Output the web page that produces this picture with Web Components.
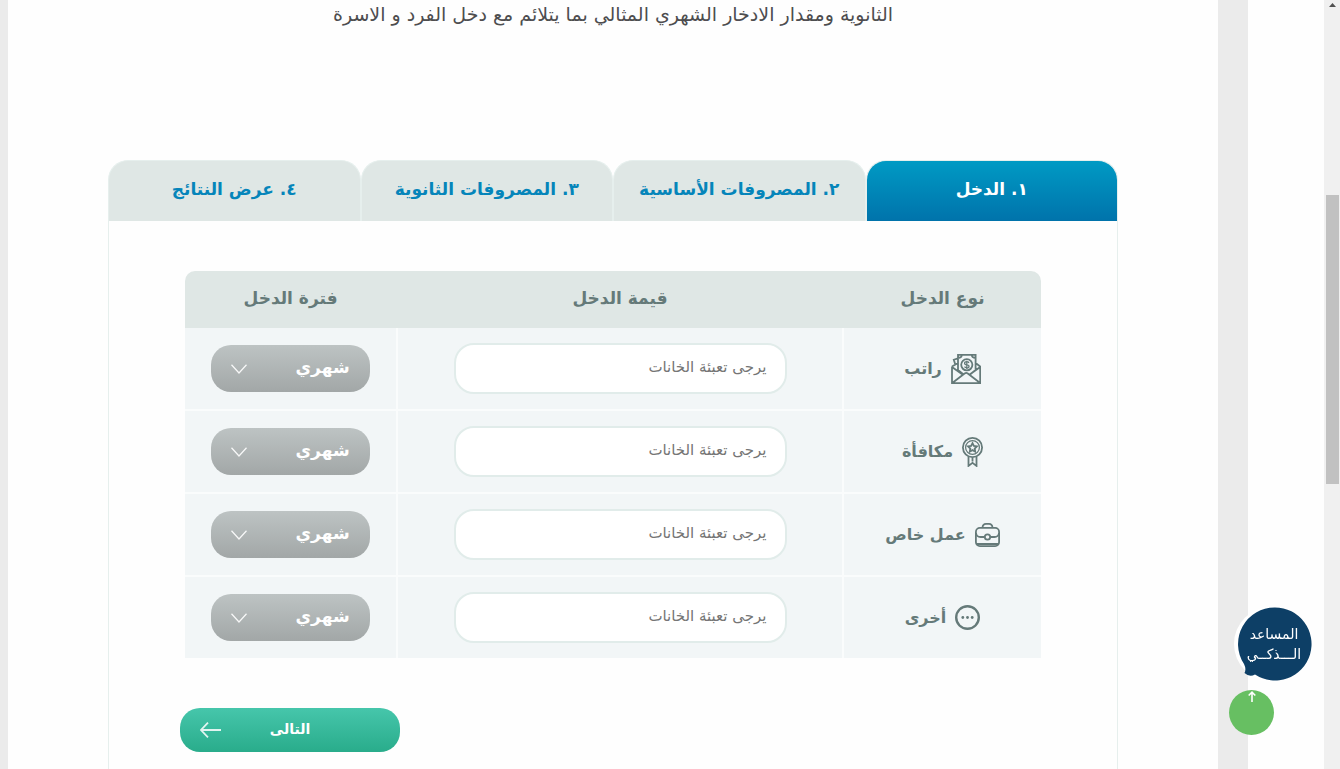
<!DOCTYPE html>
<html lang="ar" dir="rtl">
<head>
<meta charset="utf-8">
<title>حاسبة الادخار</title>
<style>
    body {
        margin: 0;
        background: #fefefe;
        font-family: "DejaVu Sans", sans-serif;
        color: #444;
    }
</style>
</head>
<body>

<page-frame>
    <p slot="intro">الثانوية ومقدار الادخار الشهري المثالي بما يتلائم مع دخل الفرد و الاسرة</p>
    <step-tabs>
        <step-tab active>١. الدخل</step-tab>
        <step-tab>٢. المصروفات الأساسية</step-tab>
        <step-tab>٣. المصروفات الثانوية</step-tab>
        <step-tab>٤. عرض النتائج</step-tab>
    </step-tabs>
    <step-panel>
        <income-table></income-table>
        <next-button slot="actions">التالى</next-button>
    </step-panel>
    <scroll-track slot="scroll"></scroll-track>
</page-frame>

<floating-tools></floating-tools>

<script>
const icons = {
    salary: `<svg width="30" height="30" viewBox="0 0 30 30">
        <path d="M7 16V.8h17.6V16M1 12.6v16.6h28.200V12.600L24.600 9M1 12.600L7 9M1 13l10.500 7.500M29.200 13l-10.500 7.500M1.600 28.800l12-9.300q1.600-1.100 3.200 0l12 9.300M7 4.300L2.800 5.700l1.600 5M10.800 .8q0 3-3.800 3.200M20.800 .8q0 3 3.800 3.200M7 16l5 4M24.600 16l-5 4"/>
        <circle cx="15.800" cy="10.800" r="5.600"/>
        <path stroke-width="1.300" d="M18 8.900q-.8-1.200-2.200-1.200-2.200 0-2.200 1.500t2.200 1.600 2.200 1.600-2.200 1.500q-1.500 0-2.300-1.200M15.800 6.700v8.300"/>
    </svg>`,
    bonus: `<svg width="21" height="30" viewBox="0 0 21 30">
        <circle cx="10.500" cy="10.500" r="9.600"/>
        <circle cx="10.500" cy="10.500" r="6.900" stroke-width="1.300"/>
        <path d="M10.500 6.200l1.400 2.700 3 .5-2.200 2.100.5 3-2.700-1.400-2.700 1.400.5-3-2.200-2.100 3-.5zM6.500 19.800v9.100l4-3 4 3v-9.100M10.500 20.500v4"/>
    </svg>`,
    business: `<svg width="25" height="24" viewBox="0 0 25 24">
        <rect x=".9" y="4.900" width="23.200" height="18.200" rx="4"/>
        <path d="M7.500 4.600Q7.800.9 11 .9h3q3.200 0 3.500 3.700M1 10q.5 4 4.500 4h4M24 10q-.5 4-4.500 4h-4M1.500 21h22"/>
        <circle cx="12.500" cy="14" r="2.700"/>
    </svg>`,
    other: `<svg width="25" height="25" viewBox="0 0 25 25">
        <circle cx="12.500" cy="12.500" r="11.300" stroke-width="2.400"/>
        <g fill="currentColor" stroke="none">
            <circle cx="7.800" cy="12.500" r="1.400"/>
            <circle cx="12.500" cy="12.500" r="1.400"/>
            <circle cx="17.200" cy="12.500" r="1.400"/>
        </g>
    </svg>`
}

const rows = [
    { id: 'salary', label: 'راتب' },
    { id: 'bonus', label: 'مكافأة' },
    { id: 'business', label: 'عمل خاص' },
    { id: 'other', label: 'أخرى' }
]

customElements.define('page-frame', class extends HTMLElement {

    constructor() {
        super()

        this.attachShadow({ mode: 'open' })

        this.shadowRoot.innerHTML = `
            <style>
                :host {
                    display: flex;
                    direction: ltr;
                    min-height: 100vh;
                    box-sizing: border-box;
                }

                main {
                    flex: 1;
                    display: flex;
                    flex-direction: column;
                    direction: rtl;
                    padding: 0 100px;
                    border-left: 8px solid #ebebeb;
                    border-right: 30px solid #ebebeb;
                }

                aside {
                    width: 76px;
                }

                ::slotted(p) {
                    margin: 0 0 132px;
                    text-align: center;
                    font-size: 19px;
                    line-height: 28px;
                    color: #4d4d4f;
                }
            </style>
            <main>
                <slot name="intro"></slot>
                <slot></slot>
            </main>
            <aside></aside>
            <slot name="scroll"></slot>
        `
    }
})

customElements.define('step-tabs', class extends HTMLElement {

    constructor() {
        super()

        this.attachShadow({ mode: 'open' })

        this.shadowRoot.innerHTML = `
            <style>
                :host {
                    display: block;
                }

                nav {
                    display: flex;
                }
            </style>
            <nav><slot></slot></nav>
        `
    }
})

customElements.define('step-tab', class extends HTMLElement {

    constructor() {
        super()

        this.attachShadow({ mode: 'open' })

        this.shadowRoot.innerHTML = `
            <style>
                :host {
                    display: flex;
                    flex: 1;
                }

                button {
                    flex: 1;
                    height: 61px;
                    padding: 0 0 4px;
                    border: 1px solid #e6efed;
                    border-bottom: none;
                    border-radius: 20px 20px 0 0;
                    background: #dfe7e5;
                    color: #0585ba;
                    font-family: inherit;
                    font-size: 17px;
                    font-weight: bold;
                    white-space: nowrap;
                    cursor: pointer;
                }

                :host([active]) button {
                    background: linear-gradient(#009ac4, #0073ab);
                    color: #fff;
                }
            </style>
            <button type="button"><slot></slot></button>
        `
    }
})

customElements.define('step-panel', class extends HTMLElement {

    constructor() {
        super()

        this.attachShadow({ mode: 'open' })

        this.shadowRoot.innerHTML = `
            <style>
                :host {
                    display: block;
                    flex: 1;
                    padding: 50px 76px 16px;
                    border: 1px solid #e6efed;
                    border-width: 0 1px;
                }

                footer {
                    display: flex;
                    justify-content: flex-end;
                    margin: 50px 0 0 -5px;
                }
            </style>
            <slot></slot>
            <footer><slot name="actions"></slot></footer>
        `
    }
})

customElements.define('income-table', class extends HTMLElement {

    constructor() {
        super()

        this.attachShadow({ mode: 'open' })

        this.shadowRoot.innerHTML = `
            <style>
                :host {
                    display: block;
                    color: #657a79;
                }

                table {
                    width: 100%;
                    table-layout: fixed;
                    border-spacing: 0;
                    border-radius: 10px 10px 0 0;
                    overflow: hidden;
                }

                .type {
                    width: 197px;
                }

                .period {
                    width: 213px;
                }

                th {
                    height: 57px;
                    padding: 0 0 4px;
                    box-sizing: border-box;
                    background: #dfe7e5;
                    font-size: 17px;
                }

                th + th {
                    border-right: 2px solid #dfe7e5;
                }

                td {
                    height: 83px;
                    padding: 0;
                    box-sizing: border-box;
                    background: #f2f6f7;
                    border-top: 2px solid #fafcfc;
                    text-align: center;
                }

                td + td {
                    border-right: 2px solid #fafcfc;
                }

                tbody tr:first-child td {
                    height: 81px;
                    border-top: none;
                }

                label {
                    display: flex;
                    align-items: center;
                    justify-content: center;
                    gap: 9px;
                    font-size: 16px;
                    font-weight: bold;
                }

                svg {
                    display: block;
                    fill: none;
                    stroke: currentColor;
                    stroke-width: 1.8;
                }

                input {
                    width: 75%;
                    height: 51px;
                    padding: 0 18px 4px;
                    box-sizing: border-box;
                    border: 2px solid #e1ecea;
                    border-radius: 20px;
                    background: #fff;
                    font-family: inherit;
                    font-size: 15px;
                    vertical-align: middle;
                }

                input::placeholder {
                    color: #757575;
                }

                .select {
                    display: inline-grid;
                    width: 75%;
                    align-items: center;
                    color: #fff;
                    vertical-align: middle;
                }

                .select > * {
                    grid-area: 1 / 1;
                }

                .select svg {
                    justify-self: end;
                    margin-left: 20px;
                    stroke-width: 1.3;
                    opacity: 0.9;
                    pointer-events: none;
                }

                select {
                    width: 100%;
                    height: 47px;
                    padding: 0 20px 4px;
                    appearance: none;
                    border: none;
                    border-radius: 20px;
                    background: linear-gradient(#bdc3c3, #a2a7a7);
                    color: inherit;
                    font-family: inherit;
                    font-size: 17px;
                    font-weight: bold;
                }

                option {
                    color: #627777;
                }
            </style>
            <table>
                <thead>
                    <tr>
                        <th class="type">نوع الدخل</th>
                        <th>قيمة الدخل</th>
                        <th class="period">فترة الدخل</th>
                    </tr>
                </thead>
                <tbody>
                    ${rows.map(row => `
                        <tr>
                            <td><label for="${row.id}">${icons[row.id]}${row.label}</label></td>
                            <td><input id="${row.id}" type="text" placeholder="يرجى تعبئة الخانات"></td>
                            <td>
                                <span class="select">
                                    <select aria-label="${row.label}">
                                        <option>شهري</option>
                                        <option>سنوي</option>
                                    </select>
                                    <svg width="16" height="10" viewBox="0 0 16 10"><path d="M.5 .8L8 9l7.500-8.200"/></svg>
                                </span>
                            </td>
                        </tr>
                    `).join('')}
                </tbody>
            </table>
        `
    }
})

customElements.define('next-button', class extends HTMLElement {

    constructor() {
        super()

        this.attachShadow({ mode: 'open' })

        this.shadowRoot.innerHTML = `
            <style>
                :host {
                    display: block;
                }

                button {
                    display: grid;
                    align-items: center;
                    width: 220px;
                    height: 44px;
                    padding: 0 20px;
                    border: none;
                    border-radius: 20px;
                    background: linear-gradient(#46c6ab, #29ac8b);
                    color: #fff;
                    font-family: inherit;
                    font-size: 14px;
                    font-weight: bold;
                    cursor: pointer;
                }

                button > * {
                    grid-area: 1 / 1;
                }

                span {
                    padding-bottom: 2px;
                }

                svg {
                    justify-self: end;
                    fill: none;
                    stroke: currentColor;
                    stroke-width: 1.8;
                    opacity: 0.85;
                }
            </style>
            <button type="button">
                <span><slot></slot></span>
                <svg width="21" height="16" viewBox="0 0 21 16"><path d="M8 .6L1 8l7 7.400M1 8h20"/></svg>
            </button>
        `
    }
})

customElements.define('scroll-track', class extends HTMLElement {

    constructor() {
        super()

        this.attachShadow({ mode: 'open' })

        this.shadowRoot.innerHTML = `
            <style>
                :host {
                    display: flex;
                    flex-direction: column;
                    align-items: center;
                    width: 16px;
                    background: #f0f0f0;
                }

                svg {
                    margin-top: 3px;
                    fill: #505050;
                }

                div {
                    width: 13px;
                    height: 289px;
                    margin-top: 188px;
                    background: #c1c1c1;
                }
            </style>
            <svg width="7" height="4" viewBox="0 0 7 4"><path d="M3.500 0L7 4H0z"/></svg>
            <div></div>
        `
    }
})

customElements.define('floating-tools', class extends HTMLElement {

    constructor() {
        super()

        this.attachShadow({ mode: 'open' })

        this.shadowRoot.innerHTML = `
            <style>
                :host {
                    position: fixed;
                    right: 28px;
                    bottom: 34px;
                    display: flex;
                    flex-direction: column;
                    align-items: flex-start;
                    gap: 9px;
                }

                button {
                    padding: 0;
                    border: none;
                    background: none;
                    color: #fff;
                    font-family: inherit;
                    cursor: pointer;
                }

                .assistant {
                    display: grid;
                    align-items: center;
                    justify-items: start;
                }

                .assistant > * {
                    grid-area: 1 / 1;
                }

                .assistant span {
                    width: 76px;
                    font-size: 14px;
                    line-height: 20px;
                    text-align: center;
                }

                svg {
                    display: block;
                }

                .top {
                    display: flex;
                    justify-content: center;
                    width: 45px;
                    height: 45px;
                    margin-right: 38px;
                    padding-top: 1px;
                    border-radius: 50%;
                    background: #67bf62;
                }
            </style>
            <button class="assistant" type="button">
                <svg width="78" height="74" viewBox="0 0 78 74">
                    <circle cx="37" cy="37" r="37" fill="#fff"/>
                    <path fill="#0d3f66" d="M41 .5a36.500 36.500 0 1 1-20 67q-5.500 3-10.500-1.500 2-4-.5-9A36.500 36.500 0 0 1 41 .5z"/>
                </svg>
                <span>المساعد<br>الـــذكــي</span>
            </button>
            <button class="top" type="button" aria-label="أعلى">
                <svg width="8" height="12" viewBox="0 0 8 12" fill="none" stroke="#fff" stroke-width="1.600"><path d="M.7 4.500L4 1.200l3.300 3.300M4 1.500V11"/></svg>
            </button>
        `
    }
})
</script>
</body>
</html>
